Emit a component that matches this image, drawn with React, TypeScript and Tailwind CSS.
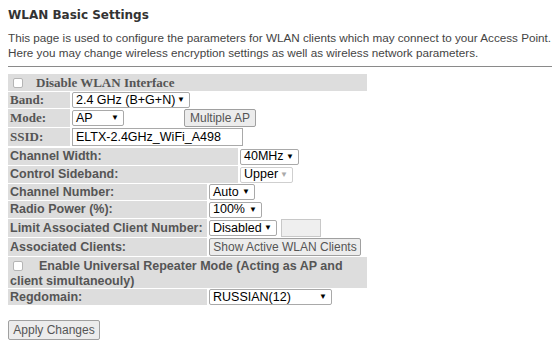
import React from 'react'

const sans = 'font-["DejaVu_Sans",sans-serif]'
const arial = 'font-["Liberation_Sans",Arial,sans-serif]'
const serif = 'font-["Liberation_Serif",serif]'
const ctl = 'font-["Liberation_Sans",Arial,sans-serif] text-[12.5px] text-black'

function Select({ value, width, disabled }: { value: string; width: string; disabled?: boolean }) {
  return (
    <div
      className={`${ctl} ${width} h-[16px] flex items-center justify-between whitespace-nowrap border rounded-[2px] bg-white pl-[3px] pr-[4px] leading-none ${
        disabled ? 'text-[#9a9a9a] border-[#cfcfcf]' : 'border-[#a9a9a9]'
      }`}
    >
      <span>{value}</span>
      <span className={`text-[8px] ${disabled ? 'text-[#aaa]' : 'text-black'}`}>▼</span>
    </div>
  )
}

function Button({ label, width }: { label: string; width: string }) {
  return (
    <div
      className={`${arial} ${width} flex items-center justify-center whitespace-nowrap border border-[#a0a0a0] rounded-[2px] bg-[#ececec] text-[12px] text-[#555] leading-none`}
    >
      {label}
    </div>
  )
}

function Check() {
  return <span className="inline-block w-[10px] h-[10px] border border-[#b5b5b5] rounded-[2px] bg-white" />
}

function Row({
  label,
  labelW,
  h,
  font = arial + ' text-[12.5px]',
  children,
}: {
  label: string
  labelW: string
  h: string
  font?: string
  children: React.ReactNode
}) {
  return (
    <div className={`flex gap-[2px] ${h}`}>
      <div className={`${labelW} ${font} bg-[#dddddd] flex items-center whitespace-nowrap pl-[2px] font-bold text-[#555]`}>
        {label}
      </div>
      <div className="flex items-center gap-[4px]">{children}</div>
    </div>
  )
}

export default function App() {
  return (
    <div className="w-[560px] h-[351px] bg-white px-[8px] pt-[8px] overflow-hidden">
      <h2 className={`${sans} text-[12px] font-bold text-[#333] leading-[14px]`}>WLAN Basic Settings</h2>
      <p className={`${arial} mt-[8px] text-[11.7px] whitespace-nowrap text-[#444] leading-[15px]`}>
        This page is used to configure the parameters for WLAN clients which may connect to your Access Point.
        <br />
        Here you may change wireless encryption settings as well as wireless network parameters.
      </p>
      <div className="mt-[6px] h-[1px] w-[544px] bg-[#8a8a8a]" />

      <div className="mt-[7px] w-[359px] flex flex-col gap-[1px]">
        <div className={`${serif} h-[17px] bg-[#dddddd] flex items-center gap-[13px] pl-[5px] text-[13px] font-bold text-[#555]`}>
          <Check />
          <span>Disable WLAN Interface</span>
        </div>
        <Row label="Band:" labelW="w-[62px]" h="h-[16px]" font={serif + ' text-[13px]'}>
          <Select value="2.4 GHz (B+G+N)" width="w-[118px]" />
        </Row>
        <Row label="Mode:" labelW="w-[62px]" h="h-[18px]" font={serif + ' text-[13px]'}>
          <Select value="AP" width="w-[52px]" />
          <div className="w-[52px]" />
          <Button label="Multiple AP" width="w-[72px] h-[18px]" />
        </Row>
        <Row label="SSID:" labelW="w-[62px]" h="h-[18px]" font={serif + ' text-[13px]'}>
          <div className={`${ctl} w-[171px] h-[18px] flex items-center border border-[#a9a9a9] pl-[3px] leading-none text-[#222]`}>
            ELTX-2.4GHz_WiFi_A498
          </div>
        </Row>
      </div>

      <div className="mt-[2px] flex flex-col gap-[1px]">
        <Row label="Channel Width:" labelW="w-[230px]" h="h-[17px]">
          <Select value="40MHz" width="w-[59px]" />
        </Row>
        <Row label="Control Sideband:" labelW="w-[230px]" h="h-[17px]">
          <Select value="Upper" width="w-[53px]" disabled />
        </Row>
      </div>

      <div className="mt-[1px] w-[359px] flex flex-col gap-[1px]">
        <Row label="Channel Number:" labelW="w-[199px]" h="h-[16px]">
          <Select value="Auto" width="w-[46px]" />
        </Row>
        <Row label="Radio Power (%):" labelW="w-[199px]" h="h-[17px]">
          <Select value="100%" width="w-[53px]" />
        </Row>
        <Row label="Limit Associated Client Number:" labelW="w-[199px]" h="h-[18px]">
          <Select value="Disabled" width="w-[68px]" />
          <div className="w-[40px] h-[18px] border border-[#c8c8c8] bg-[#efefef]" />
        </Row>
        <Row label="Associated Clients:" labelW="w-[199px]" h="h-[18px]">
          <Button label="Show Active WLAN Clients" width="w-[152px] h-[18px]" />
        </Row>
        <div className={`${arial} h-[31px] bg-[#dddddd] pl-[2px] pt-[2px] whitespace-nowrap text-[12.5px] font-bold text-[#555] leading-[14px]`}>
          <span className="inline-block align-[-1px] ml-[3px] mr-[16px]">
            <Check />
          </span>
          Enable Universal Repeater Mode (Acting as AP and
          <br />
          client simultaneouly)
        </div>
        <Row label="Regdomain:" labelW="w-[199px]" h="h-[16px]">
          <Select value="RUSSIAN(12)" width="w-[123px]" />
        </Row>
      </div>

      <div className="mt-[15px]">
        <Button label="Apply Changes" width="w-[92px] h-[20px]" />
      </div>
    </div>
  )
}
